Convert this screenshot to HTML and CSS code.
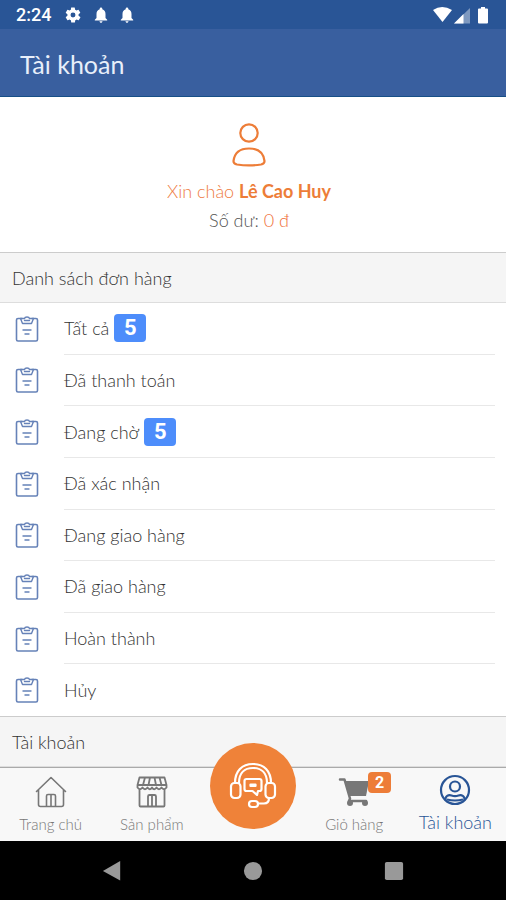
FILE: index.html
```html
<!DOCTYPE html>
<html lang="vi">
<head>
<meta charset="utf-8">
<meta name="viewport" content="width=device-width, initial-scale=1">
<title>Tài khoản</title>
<link rel="stylesheet" href="styles.css">
</head>
<body>
<svg class="defs" aria-hidden="true">
  <symbol id="bell" viewBox="0 0 14 16"><path d="M7 0.500c.8 0 1.300.6 1.300 1.300v.5C10.400 2.900 11.500 4.700 11.500 7v4l1.700 1.700v.8H.8v-.8L2.500 11V7c0-2.300 1.100-4.100 3.200-4.700v-.5C5.700 1.100 6.200.5 7 .5zM5.500 14.200h3c0 .8-.7 1.500-1.500 1.500s-1.500-.7-1.500-1.500z" fill="currentColor"/></symbol>
  <symbol id="order" viewBox="0 0 24 26"><g fill="none" stroke="currentColor" stroke-width="1.600" stroke-linejoin="round" stroke-linecap="round"><path d="M7 2.500H3Q1.500 2.500 1.500 4v19.500Q1.500 25 3 25h18q1.500 0 1.500-1.500V4Q22.500 2.500 21 2.500h-4"/><path d="M5.500 2.500l2 5h9l2-5h-4Q14.200 1 12 1T9.500 2.500zM9.500 4.500h5M8 14h8M10 18h4" stroke-width="1.400"/></g></symbol>
</svg>

<div class="status">
  <span class="clock">2:24</span>
  <svg class="gear" viewBox="0 0 24 24" aria-hidden="true"><path fill="currentColor" d="M19.400 13a7.500 7.500 0 0 0 0-2l2.100-1.600a.5.5 0 0 0 .1-.6l-2-3.500a.5.5 0 0 0-.6-.2l-2.500 1a7 7 0 0 0-1.700-1l-.4-2.600a.5.5 0 0 0-.5-.5h-4a.5.5 0 0 0-.5.5L9.200 5.100a7 7 0 0 0-1.700 1L5 5.100a.5.5 0 0 0-.6.2l-2 3.500a.5.5 0 0 0 .1.6L4.600 11a7.500 7.500 0 0 0 0 2l-2.100 1.600a.5.5 0 0 0-.1.6l2 3.500c.1.2.4.3.6.2l2.500-1a7 7 0 0 0 1.700 1l.4 2.600c0 .3.200.5.500.5h4c.3 0 .5-.2.5-.5l.4-2.600a7 7 0 0 0 1.700-1l2.500 1c.2.1.5 0 .6-.2l2-3.500a.5.5 0 0 0-.1-.6zM12 15.300a3.300 3.300 0 1 1 0-6.600 3.300 3.300 0 0 1 0 6.600z"/></svg>
  <svg class="bell" aria-hidden="true"><use href="#bell"/></svg>
  <svg class="bell" aria-hidden="true"><use href="#bell"/></svg>
  <svg class="signals" viewBox="0 0 58 18" aria-hidden="true"><g fill="currentColor"><path d="M1 4Q10-2 20 4L10.500 16z"/><path d="M22 17.500L38 2v15.500z" opacity=".4"/><path d="M22 17.500L31.500 8v9.500z"/><path d="M49 1h4v1.500h2q1 0 1 1v13q0 1-1 1h-8q-1 0-1-1v-13q0-1 1-1h2z"/></g></svg>
</div>

<header class="title"><h1>Tài khoản</h1></header>

<main class="page">
  <section class="profile">
    <svg class="person" viewBox="0 0 34 44" fill="none" stroke="currentColor" stroke-width="2.200" aria-hidden="true"><circle cx="17" cy="10" r="8.700"/><path d="M1.500 38C2.500 30 8 25.500 17 25.500S31.500 30 32.500 38C32.700 40.500 31.500 41 29 41.500Q17 43.300 5 41.500C2.500 41 1.300 40.500 1.500 38z"/></svg>
    <p class="hello">Xin chào <strong>Lê Cao Huy</strong></p>
    <p class="balance">Số dư: <span>0 đ</span></p>
  </section>

  <h2 class="section">Danh sách đơn hàng</h2>
  <ul class="orders">
    <li><a href="#all"><svg class="icon" aria-hidden="true"><use href="#order"/></svg><span class="label">Tất cả <b class="count">5</b></span></a></li>
    <li><a href="#paid"><svg class="icon" aria-hidden="true"><use href="#order"/></svg><span class="label">Đã thanh toán</span></a></li>
    <li><a href="#pending"><svg class="icon" aria-hidden="true"><use href="#order"/></svg><span class="label">Đang chờ <b class="count">5</b></span></a></li>
    <li><a href="#confirmed"><svg class="icon" aria-hidden="true"><use href="#order"/></svg><span class="label">Đã xác nhận</span></a></li>
    <li><a href="#shipping"><svg class="icon" aria-hidden="true"><use href="#order"/></svg><span class="label">Đang giao hàng</span></a></li>
    <li><a href="#delivered"><svg class="icon" aria-hidden="true"><use href="#order"/></svg><span class="label">Đã giao hàng</span></a></li>
    <li><a href="#done"><svg class="icon" aria-hidden="true"><use href="#order"/></svg><span class="label">Hoàn thành</span></a></li>
    <li><a href="#cancelled"><svg class="icon" aria-hidden="true"><use href="#order"/></svg><span class="label">Hủy</span></a></li>
  </ul>
  <h2 class="section">Tài khoản</h2>
</main>

<nav class="tabs">
  <a href="#home"><svg class="tab-icon" viewBox="0 0 32 32" fill="none" stroke="currentColor" stroke-width="1.600" stroke-linejoin="round" stroke-linecap="round" aria-hidden="true"><path d="M1.500 15.500L16 1.500l14.500 14M3.500 14v14.500Q3.500 30.500 5.500 30.500h21q2 0 2-2V14M11.500 30V20q0-1.500 1.500-1.500h6q1.500 0 1.500 1.500v10M16 19v11"/></svg>Trang chủ</a>
  <a href="#products"><svg class="tab-icon" viewBox="0 0 32 32" fill="none" stroke="currentColor" stroke-width="1.800" stroke-linejoin="round" aria-hidden="true"><path d="M3.500 1.500h25L30.500 9v2.500q-2.500 3.500-5 0-2.500 3.500-5 0-2.300 3.500-4.500 0-2.200 3.500-4.500 0-2.500 3.500-5 0-2.500 3.500-5 0V9zM1.500 9h29M9 1.500L7 9M14 1.500L12.500 9M18.500 1.500L20 9M23.500 1.500L25.500 9M3.500 13v16.500q0 1 1 1h23q1 0 1-1V13M12 30V20.500q0-1.500 1.500-1.500h5q1.500 0 1.500 1.500V30M16 19v11"/></svg>Sản phẩm</a>
  <button class="support" type="button" aria-label="Hỗ trợ"><svg viewBox="0 0 48 48" fill="none" stroke="currentColor" stroke-width="2.200" stroke-linejoin="round" stroke-linecap="round" aria-hidden="true"><path d="M6 21C6 9 13 2 24 2s18 7 18 19M10 21C10 11 15.500 6 24 6s14 5 14 15"/><rect x="2" y="21" width="9.500" height="15" rx="3.500"/><rect x="36.500" y="21" width="9.500" height="15" rx="3.500"/><path d="M17.500 17h13q2 0 2 2v8q0 2-2 2H29l-1 4-4.500-4h-6q-2 0-2-2v-8q0-2 2-2zM21.500 22.500h5v1.500h-5zM40 36q0 5.500-5 5.500h-6"/><rect x="20" y="39" width="9" height="6" rx="3"/></svg></button>
  <a href="#cart"><span class="cart"><svg class="tab-icon" viewBox="0 0 32 32" aria-hidden="true"><path fill="none" stroke="currentColor" stroke-width="2.500" stroke-linejoin="round" stroke-linecap="round" d="M2 3.500h4.500l5.500 19-1 2.500h17"/><path fill="currentColor" d="M7 5h24l-3 15H11z"/><circle cx="12" cy="27" r="3" fill="currentColor"/><circle cx="27" cy="27" r="3" fill="currentColor"/></svg><b class="cart-count">2</b></span>Giỏ hàng</a>
  <a href="#account" class="active" aria-current="page"><svg class="tab-icon" viewBox="0 0 32 32" fill="none" stroke="currentColor" stroke-width="2.200" aria-hidden="true"><circle cx="16" cy="16" r="14"/><circle cx="16" cy="12.500" r="5"/><path d="M6.500 26c-.5-4 3-5.500 6-4.500q3.500 1.200 7 0c3-1 6.500.5 6 4.500M8 25.500q8 2 16 0"/></svg>Tài khoản</a>
</nav>

<div class="system">
  <button type="button" aria-label="Quay lại"><svg viewBox="0 0 22 22"><path d="M20 0v21.500L1 11z"/></svg></button>
  <button type="button" aria-label="Màn hình chính"><svg viewBox="0 0 22 22"><circle cx="11" cy="11" r="10"/></svg></button>
  <button type="button" aria-label="Ứng dụng gần đây"><svg viewBox="0 0 22 22"><rect x="1" y="1" width="20" height="20" rx="2"/></svg></button>
</div>
</body>
</html>
```

FILE: styles.css
```css
* { box-sizing: border-box; }

body {
  margin: 0;
  min-height: 100vh;
  display: flex;
  flex-direction: column;
  background: #fff;
  color: #333;
  font-family: Lato, "Open Sans", sans-serif;
  font-size: 18px;
  font-weight: 300;
}

h1, h2, p, ul { margin: 0; padding: 0; font-weight: inherit; }
a { color: inherit; text-decoration: none; }
button { border: 0; padding: 0; cursor: pointer; }
.defs { display: none; }

.status {
  height: 29px;
  padding: 0 16px;
  display: flex;
  align-items: center;
  background: #295596;
  color: #fff;
}
.clock { font: 500 18px Roboto, sans-serif; }
.gear { width: 18px; height: 18px; margin-left: 13px; }
.bell { width: 14px; height: 16px; margin-left: 12px; }
.signals { width: 58px; height: 18px; margin-left: auto; }

.title {
  height: 68px;
  padding: 2px 20px 0;
  display: flex;
  align-items: center;
  background: #395f9f;
  border-bottom: 1px solid #174f87;
  color: #e8effa;
}
.title h1 { font-size: 25px; font-weight: 400; }

.page { flex: 1; display: flex; flex-direction: column; }

.profile {
  height: 155px;
  padding: 26px 8px 0 0;
  text-align: center;
}
.person { display: block; width: 34px; height: 44px; margin: 0 auto; color: #ed7d38; }
.hello { margin-top: 10px; line-height: 29px; color: #ee7c43; }
.hello strong { color: #ed7d38; font-weight: 700; }
.balance { line-height: 29px; color: #555; }
.balance span { color: #f0713c; }

.section {
  height: 51px;
  padding: 0 12px;
  display: flex;
  align-items: center;
  background: #f5f5f5;
  border-top: 1px solid #ccc;
  border-bottom: 1px solid #ddd;
  font-size: 18px;
}

.orders {
  flex: 1;
  display: grid;
  grid-auto-rows: 1fr;
  list-style: none;
}
.orders li { display: flex; }
.orders a { flex: 1; display: flex; padding: 0 11px 0 15px; }
.icon { width: 24px; height: 26px; margin-right: 25px; align-self: center; color: #6682b8; }
.label {
  flex: 1;
  display: flex;
  align-items: center;
  gap: 5px;
  border-bottom: 1px solid #e8e8e8;
}
.orders li:last-child .label { border-bottom: 0; }
.count {
  width: 32px;
  border-radius: 4px;
  background: #4d8dfb;
  color: #fff;
  font: 700 22px/28px Roboto, sans-serif;
  text-align: center;
}

.tabs {
  height: 74px;
  display: grid;
  grid-template-columns: repeat(5, 1fr);
  background: #f8f8f8;
  border-top: 1px solid #aaa;
  color: #777;
  font-size: 15px;
}
.tabs a {
  display: flex;
  flex-direction: column;
  align-items: center;
  gap: 6px;
  padding-top: 8px;
  line-height: 20px;
}
.tab-icon { display: block; width: 32px; height: 32px; color: #777; }
.tabs .active { color: #295596; font-size: 18px; padding-top: 6px; }
.active .tab-icon { color: #295596; }
.support {
  width: 86px;
  height: 86px;
  margin-top: -25px;
  justify-self: center;
  display: grid;
  place-items: center;
  border-radius: 50%;
  background: #ef8239;
  color: #fff;
}
.support svg { width: 48px; height: 48px; }
.cart { position: relative; }
.cart-count {
  position: absolute;
  top: -4px;
  right: -21px;
  width: 23px;
  border-radius: 4px;
  background: #ed7d38;
  color: #fff;
  font: 700 16px/21px Roboto, sans-serif;
  text-align: center;
}

.system {
  height: 59px;
  padding: 0 42px;
  display: grid;
  grid-template-columns: repeat(3, 1fr);
  align-items: center;
  justify-items: center;
  background: #000;
}
.system button { background: none; }
.system svg { display: block; width: 20px; height: 20px; fill: #999; }
```
